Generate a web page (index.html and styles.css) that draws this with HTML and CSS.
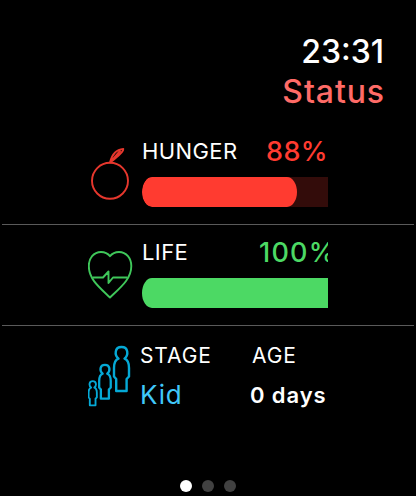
FILE: index.html
```
<!DOCTYPE html>
<html lang="en">
<head>
    <meta charset="UTF-8">
    <title>Status</title>
    <link rel="stylesheet" href="styles.css">
</head>
<body>
    <div class="watch">
        <header class="header">
            <div class="time">23:31</div>
            <div class="title">Status</div>
        </header>

        <div class="row hunger">
            <svg class="icon" width="54" height="101" viewBox="88 124 54 101">
                <circle cx="110" cy="180.8" r="18"/>
                <path d="M110 162.5 C111.5 156 115 149.5 123.3 148.9 C124 152.5 116 157.5 110 162.5 L120.5 150.5"/>
            </svg>
            <div class="content">
                <div class="line">
                    <span class="label">HUNGER</span>
                    <span class="value">88%</span>
                </div>
                <div class="bar"><div class="fill" style="width: 155px"></div></div>
            </div>
        </div>

        <div class="row life">
            <svg class="icon" width="54" height="101" viewBox="88 225 54 101">
                <path d="M110 256.2 C107.5 253 104.5 252 101 252 C93.5 252 88.8 258.5 88.8 266 C88.8 279 99 287 110 297.5 C121 287 131.3 279 131.3 266 C131.3 258.5 126.5 252 119 252 C115.5 252 112.5 253 110 256.2 Z"/>
                <path d="M92.5 277.5 H103 L108.5 271.5 V283 L113 277.5 H127.5"/>
            </svg>
            <div class="content">
                <div class="line">
                    <span class="label">LIFE</span>
                    <span class="value">100%</span>
                </div>
                <div class="bar"><div class="fill full"></div></div>
            </div>
        </div>

        <div class="row info">
            <svg class="icon" width="53" height="101" viewBox="88 326 53 101">
                <defs>
                    <path id="person" d="M118.5 358.6 C114.2 355 114.6 347 121.5 347 C128.4 347 128.8 355 124.5 358.6 C128 359.8 129 363.5 129 368 V376.5 L126.6 379 V391 H116.2 V379 L114 376.5 V368 C114 363.5 115 359.8 118.5 358.6 Z"/>
                </defs>
                <use href="#person"/>
                <use href="#person" class="medium"/>
                <use href="#person" class="small"/>
            </svg>
            <div class="stage">
                <div class="label">STAGE</div>
                <div class="kid">Kid</div>
            </div>
            <div class="age">
                <div class="label">AGE</div>
                <div class="days">0 days</div>
            </div>
        </div>

        <!-- Page indicator -->
        <div class="dots">
            <span class="dot active"></span>
            <span class="dot"></span>
            <span class="dot"></span>
        </div>
    </div>
</body>
</html>
```
FILE: styles.css
```
body {
    margin: 0;
    background: #000;
    color: #fff;
    font-family: Inter, sans-serif;
}

.watch {
    display: flex;
    flex-direction: column;
    box-sizing: border-box;
    width: 416px;
    height: 496px;
    padding: 32px 2px 4px;
    overflow: hidden;
}

/* Header */
.header {
    height: 92px;
    padding-right: 30px;
    text-align: right;
    font-size: 32px;
    line-height: 40px;
}

.time {
    font-weight: 500;
}

.title {
    margin-right: -1px;
    color: #ff6b67;
    font-weight: 500;
    letter-spacing: 0.9px;
}

/* Rows */
.row {
    display: flex;
    box-sizing: border-box;
    height: 101px;
    padding-left: 86px;
    border-bottom: 1px solid #5a5a5a;
}

.icon {
    flex: none;
    fill: none;
    stroke-width: 1.9;
    stroke-linejoin: round;
}

.content {
    width: 186px;
    padding-top: 12px;
    overflow: hidden;
}

.line {
    display: flex;
    height: 30px;
    line-height: 30px;
    margin-bottom: 11px;
}

.label {
    flex: none;
    font-size: 22px;
    letter-spacing: 0.4px;
}

.value {
    font-size: 27px;
    font-weight: 500;
    line-height: 32px;
    letter-spacing: 0.4px;
}

.bar {
    height: 30px;
    overflow: hidden;
}

.fill {
    height: 30px;
    border-radius: 10px / 15px;
}

.full {
    width: 200px;
}

.hunger .icon {
    stroke: #e6372d;
}

.hunger .label {
    width: 124px;
}

.hunger .value {
    color: #ff3b30;
}

.hunger .bar {
    background: #330c0a;
    border-radius: 10px 0 0 10px / 15px 0 0 15px;
}

.hunger .fill {
    background: #ff3b30;
}

.life .icon {
    stroke: #3fc75a;
}

.life .label {
    width: 117px;
}

.life .value {
    color: #4cd964;
    letter-spacing: 1.2px;
}

.life .fill {
    background: #4cd964;
}

/* Stage and age */
.info {
    border-bottom: none;
}

.info .icon {
    stroke: #05a9d6;
    stroke-width: 2.4;
}

.medium {
    transform: translate(11.4px, 97.6px) scale(0.77);
    stroke-width: 3;
}

.small {
    transform: translate(25.9px, 190.3px) scale(0.55);
    stroke-width: 3.4;
}

.stage {
    width: 112px;
    margin-left: -1px;
    padding-top: 10px;
}

.age {
    padding-top: 10px;
}

.info .label {
    font-size: 21px;
    line-height: 40px;
    letter-spacing: 0.9px;
}

.kid,
.days {
    line-height: 38px;
}

.kid {
    color: #40c8fa;
    font-size: 26px;
    letter-spacing: 0.8px;
}

.days {
    margin-left: -2px;
    font-size: 22px;
    font-weight: 600;
    letter-spacing: 0.9px;
}

/* Page indicator */
.dots {
    display: flex;
    justify-content: center;
    gap: 10px;
    margin-top: auto;
}

.dot {
    width: 12px;
    height: 12px;
    border-radius: 50%;
    background: #414141;
}

.active {
    background: #fff;
}
```
